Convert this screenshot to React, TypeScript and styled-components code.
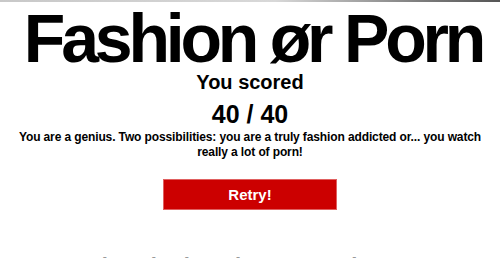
import React from "react";
import styled, { createGlobalStyle } from "styled-components";

const GlobalStyle = createGlobalStyle`
  html, body {
    margin: 0;
    padding: 0;
    background: #fff;
  }
  body {
    font-family: "Liberation Sans", Arial, Helvetica, sans-serif;
    color: #000;
  }
`;

const Page = styled.div`
  width: 500px;
  height: 258px;
  overflow: hidden;
  border-top: 2px solid transparent;
  border-image: linear-gradient(to right, #c8c8c8 0%, #d8d8d8 55%, #7a7a7a 85%, #555 100%) 1;
  box-sizing: border-box;
  display: flex;
  flex-direction: column;
  align-items: center;
  text-align: center;

  & > * {
    flex-shrink: 0;
  }
`;

const Title = styled.h1`
  margin: 0;
  padding-left: 6px;
  font-size: 68px;
  line-height: 1.08;
  font-weight: bold;
  letter-spacing: -4.2px;
  white-space: nowrap;
`;

const Subtitle = styled.h2`
  margin: 0;
  font-size: 20px;
  line-height: 14px;
  font-weight: bold;
`;

const Score = styled.div`
  margin-top: 11px;
  font-size: 25px;
  line-height: 28px;
  font-weight: bold;
`;

const Verdict = styled.p`
  margin: 2px 0 0;
  width: 482px;
  font-size: 12px;
  line-height: 15px;
  font-weight: bold;
  letter-spacing: -0.12px;
`;

const RetryButton = styled.button`
  margin-top: 19px;
  width: 174px;
  height: 31px;
  box-sizing: border-box;
  border: 1px solid #e06060;
  background: #cc0000;
  color: #fff;
  font-family: inherit;
  font-size: 15px;
  font-weight: bold;
  cursor: pointer;
`;

const ShareHeading = styled.h3`
  margin: 43px 0 0;
  font-size: 22px;
  font-weight: bold;
  color: #9a9a9a;
  white-space: nowrap;
`;

export default function App() {
  return (
    <>
      <GlobalStyle />
      <Page>
        <Title>Fashion ør Porn</Title>
        <Subtitle>You scored</Subtitle>
        <Score>40 / 40</Score>
        <Verdict>
          You are a genius. Two possibilities: you are a truly fashion addicted or... you watch really a lot of porn!
        </Verdict>
        <RetryButton>Retry!</RetryButton>
        <ShareHeading>Take a look at the top 10 players!</ShareHeading>
      </Page>
    </>
  );
}
